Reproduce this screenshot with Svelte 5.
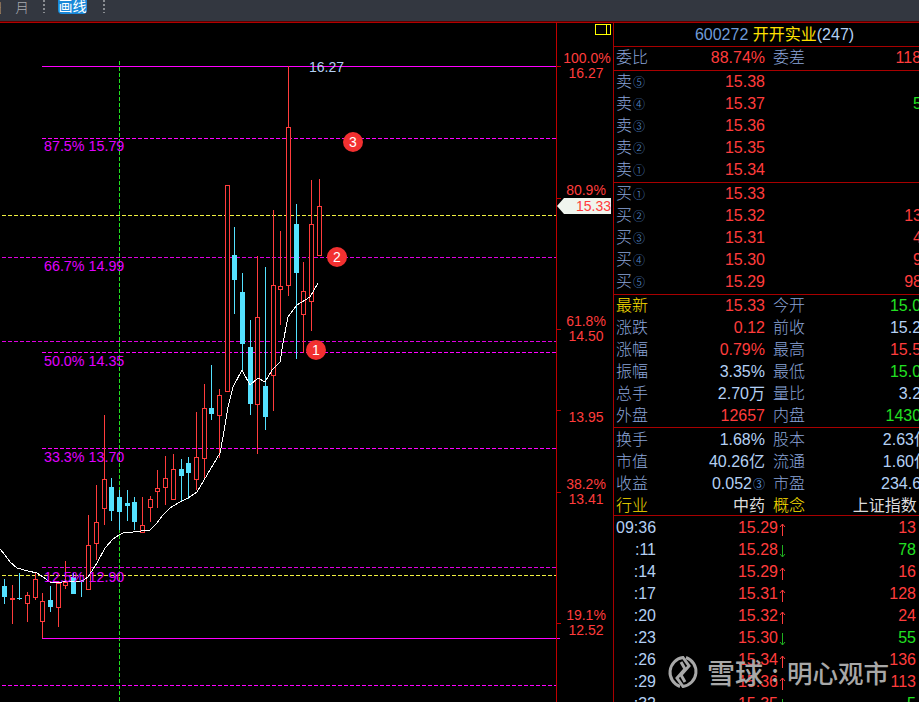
<script>
  // x, high, low, bodyTop, bodyBottom, up (red hollow) / down (cyan filled)
  const candles = [
    [4,579,604,586,597,0],[12,585,624,598,599,1],[19,573,600,598,599,0],[27,592,622,595,603,1],
    [35,573,600,579,597,1],[42,593,638,601,621,1],[50,586,612,600,607,0],[58,582,627,583,607,1],
    [65,561,589,582,585,1],[73,573,594,577,594,0],[81,580,597,581,582,0],[88,515,589,545,589,1],
    [96,485,560,522,543,1],[104,415,525,479,508,1],[111,478,521,487,511,0],[119,490,530,497,512,0],
    [127,490,521,503,506,0],[134,497,530,502,522,0],[142,497,532,525,532,1],[150,496,522,499,507,1],
    [157,470,508,488,491,1],[165,456,505,478,487,1],[173,454,499,469,499,1],[181,459,502,469,476,0],
    [188,457,499,463,473,0],[196,412,490,457,479,1],[204,384,478,408,458,1],[211,365,420,408,414,0],
    [219,389,458,395,415,1],[227,185,392,185,391,1],[234,227,314,255,280,0],[242,273,370,292,344,0],
    [250,320,415,347,404,0],[257,256,454,317,404,1],[265,267,430,386,417,0],[273,210,411,285,375,1],
    [280,231,325,286,289,1],[288,66,296,127,285,1],[296,204,359,224,273,0],[303,262,353,291,314,1],
    [311,180,331,224,301,1],[319,179,255,206,255,1]
  ];
  const ma = '0,549 5,555 10,562 17,568 28,571 37,573 43,577 50,582 62,582 82,581 88,577 97,563 105,548 113,539 119,535 123,533 133,532 150,530 157,523 163,515 170,508 180,502 188,498 197,492 207,475 220,453 223,437 228,407 233,387 242,370 250,385 258,378 265,382 272,370 280,362 283,343 288,317 297,305 310,297 318,283';
  const dashed = [
    {y:138,x:42,c:'#ff00ff'},{y:257,x:2,c:'#e000e0'},{y:341,x:2,c:'#e000e0'},{y:352,x:42,c:'#ff00ff'},
    {y:448,x:42,c:'#ff00ff'},{y:567,x:42,c:'#e000e0'},{y:685,x:2,c:'#ff00ff'}
  ];
  const fibs = [[44,151,'87.5% 15.79'],[44,271,'66.7% 14.99'],[44,366,'50.0% 14.35'],[44,462,'33.3% 13.70'],[44,582,'12.5% 12.90']];
  const badges = [[353,142,'3'],[337,257,'2'],[316,350,'1']];
  const axis = [[587,63,'100.0%'],[586,78,'16.27'],[586,195,'80.9%'],[586,326,'61.8%'],[586,341,'14.50'],[586,422,'13.95'],[586,489,'38.2%'],[586,504,'13.41'],[586,620,'19.1%'],[586,635,'12.52']];
  const ticks = [66,198,329,410,492,623];
  const asks = [['卖','⑤','15.38',''],['卖','④','15.37','5x'],['卖','③','15.36',''],['卖','②','15.35',''],['卖','①','15.34','']];
  const bids = [['买','①','15.33',''],['买','②','15.32','13x'],['买','③','15.31','4x'],['买','④','15.30','9x'],['买','⑤','15.29','98x']];
  const stats = [
    ['最新','y','15.33','r','今开','15.09','g'],['涨跌','l','0.12','r','前收','15.21','v'],
    ['涨幅','l','0.79%','r','最高','15.56','r'],['振幅','l','3.35%','v','最低','15.05','g'],
    ['总手','l','2.70万','v','量比','3.27','v'],['外盘','l','12657','r','内盘','14303','g']
  ];
  const fund = [['换手','1.68%','股本','2.63亿',''],['市值','40.26亿','流通','1.60亿',''],['收益','0.052','市盈','234.67','③']];
  const ticksList = [
    ['09:36','15.29',1,'13','r'],[':11','15.28',0,'78','g'],[':14','15.29',1,'16','r'],
    [':17','15.31',1,'128','r'],[':20','15.32',1,'24','r'],[':23','15.30',0,'55','g'],
    [':26','15.34',1,'136','r'],[':29','15.36',1,'113','r'],[':32','15.35',0,'5','g']
  ];
</script>

<div class="screen">
  <header class="toolbar">
    <span class="tab cut">日</span>
    <span class="tab">月</span>
    <span class="dots first"></span>
    <span class="draw">画线</span>
    <span class="dots"></span>
  </header>
  <main class="main">
    <svg class="chart" width="613" height="680" viewBox="0 22 613 680">
      <!-- price grid -->
      <line x1="119.5" y1="61" x2="119.5" y2="702" stroke="#20e020" stroke-dasharray="4 2"/>
      <line x1="42" y1="66.5" x2="560" y2="66.5" stroke="#ff00ff"/>
      <line x1="42" y1="638.5" x2="560" y2="638.5" stroke="#ff00ff"/>
      {#each dashed as d}
        <line x1={d.x} y1={d.y + .5} x2="556" y2={d.y + .5} stroke={d.c} stroke-dasharray="4 2"/>
      {/each}
      <line x1="2" y1="215.5" x2="556" y2="215.5" stroke="#f0f040" stroke-dasharray="4 2"/>
      <line x1="2" y1="575.5" x2="556" y2="575.5" stroke="#f0f040" stroke-dasharray="4 2"/>

      <!-- candles -->
      {#each candles as [x, hi, lo, top, bot, up]}
        {#if up}
          <line x1={x + .5} y1={hi} x2={x + .5} y2={top} stroke="#ff3c3c"/>
          <line x1={x + .5} y1={bot} x2={x + .5} y2={lo} stroke="#ff3c3c"/>
          <rect x={x - 1.5} y={top + .5} width="4" height={Math.max(bot - top, 1)} fill="#000" stroke="#ff3c3c"/>
        {:else}
          <line x1={x + .5} y1={hi} x2={x + .5} y2={lo} stroke="#54e1ff"/>
          <rect x={x - 2} y={top} width="5" height={Math.max(bot - top, 1)} fill="#54e1ff"/>
        {/if}
      {/each}
      <polyline points={ma} fill="none" stroke="#fff" stroke-width="1" shape-rendering="crispEdges"/>

      <!-- fibonacci labels -->
      {#each fibs as [x, y, t]}
        <text class="fib" {x} {y}>{t}</text>
      {/each}
      <text class="high" x="309" y="72">16.27</text>

      <!-- numbered badges -->
      {#each badges as [x, y, n]}
        <circle cx={x} cy={y} r="10" fill="#f23030"/>
        <text class="badge" {x} y={y + 5}>{n}</text>
      {/each}

      <!-- axis -->
      <line x1="556.5" y1="22" x2="556.5" y2="702" stroke="#c00000"/>
      {#each ticks as y}
        <line x1="556" y1={y + .5} x2="561" y2={y + .5} stroke="#c00000"/>
      {/each}
      {#each axis as [x, y, t]}
        <text class="axis" {x} {y}>{t}</text>
      {/each}
      <rect x="595.5" y="24.5" width="15" height="10" fill="none" stroke="#ffff00"/>
      <line x1="606.5" y1="24" x2="606.5" y2="35" stroke="#ffff00"/>
      <polygon points="557,206 564,198 611,198 611,214 564,214" fill="#f0f5ee"/>
      <text class="tag" x="611" y="211">15.33</text>
    </svg>

    <section class="panel">
      <div class="title"><span class="c-b">600272</span> <span class="c-y">开开实业</span><span class="c-v">(247)</span></div>

      <div class="block head">
        <div class="row">
          <span class="lbl">委比</span><span class="val c-r">88.74%</span><span class="lbl2">委差</span><span class="val2 c-r">1186</span>
        </div>
      </div>

      <div class="block book">
        {#each asks as [a, n, p, v]}
          <div class="row"><span class="lbl">{a}<i class="num">{n}</i></span><span class="val c-r">{p}</span><span class="lbl2"></span><span class="val2 c-g">{v}</span></div>
        {/each}
      </div>

      <div class="block book">
        {#each bids as [a, n, p, v]}
          <div class="row"><span class="lbl">{a}<i class="num">{n}</i></span><span class="val c-r">{p}</span><span class="lbl2"></span><span class="val2 c-r">{v}</span></div>
        {/each}
      </div>

      <div class="block">
        {#each stats as [a, ac, b, bc, c, d, dc]}
          <div class="row">
            <span class="lbl c-{ac}">{a}</span><span class="val c-{bc}">{b}</span><span class="lbl2">{c}</span><span class="val2 c-{dc}">{d}</span>
          </div>
        {/each}
      </div>

      <div class="block fund">
        {#each fund as [a, b, c, d, s]}
          <div class="row"><span class="lbl">{a}</span><span class="val c-v">{b}{#if s}<i class="num">{s}</i>{/if}</span><span class="lbl2">{c}</span><span class="val2 c-v">{d}</span></div>
        {/each}
        <div class="row"><span class="lbl c-y">行业</span><span class="val c-w">中药</span><span class="lbl2 c-y">概念</span><span class="val2 c-w">上证指数 ..</span></div>
      </div>

      <div class="trades">
        {#each ticksList as [t, p, up, v, c]}
          <div class="trade">
            <span class="time c-v">{t}</span>
            <span class="price c-r">{p}
              <svg class="arrow" width="7" height="13" viewBox="0 0 7 13" fill="none" stroke={up ? '#ff3c3c' : '#1fb01f'}>
                {#if up}<path d="M3.5 1v12M1 4l2.5-3L6 4"/>{:else}<path d="M3.5 0v12M1 9l2.5 3L6 9"/>{/if}
              </svg>
            </span>
            <span class="vol c-{c}">{v}</span>
          </div>
        {/each}
      </div>
    </section>
  </main>

  <div class="mark">
    <svg width="34" height="34" viewBox="0 0 34 34" fill="none" stroke="#a8a8a8" stroke-width="3">
      <path d="M14 31.5A15 15 0 0 1 17 2.5L23 11 15 20 19 27"/>
      <path d="M20 2.5A15 15 0 0 1 17 31.5L11 23 19 14 15 7"/>
    </svg>
    <span class="mark-a">雪球</span><span class="mark-c">:</span><span class="mark-b">明心观市</span>
  </div>
</div>

<style>
  :global(body) { margin: 0; background: #000; }
  .screen {
    position: relative;
    width: 919px;
    height: 702px;
    overflow: hidden;
    background: #000;
    font-family: "Liberation Sans", "Noto Sans CJK SC", sans-serif;
  }
  .toolbar {
    display: flex;
    align-items: flex-start;
    height: 21px;
    box-sizing: border-box;
    background: #333740;
    box-shadow: 0 1px 0 #5a0000;
    position: relative;
    z-index: 1;
  }
  .tab {
    font: 300 14px/14px "Noto Sans CJK SC", sans-serif;
    color: #a8abb0;
    height: 14px;
    overflow: hidden;
  }
  .cut { width: 3px; direction: rtl; margin-right: 12px; }
  .dots {
    width: 2px;
    height: 13px;
    background: repeating-linear-gradient(#8a8d92 0 2px, transparent 2px 4px);
  }
  .first { margin-left: 14px; }
  .draw {
    width: 29px;
    height: 14px;
    margin: 0 16px 0 13px;
    text-align: center;
    background: #1a88d8;
    border-radius: 0 0 4px 4px;
    color: #fff;
    font: 400 14px/11px "Noto Sans CJK SC", sans-serif;
    overflow: hidden;
  }
  .main {
    display: flex;
    height: 680px;
    margin-top: 1px;
    border-top: 1px solid #b00000;
    box-sizing: border-box;
  }
  .chart { display: block; flex: none; margin-top: -1px; }
  .fib { font-size: 14.3px; fill: #e000ff; }
  .high { font-size: 14px; fill: #b4d0f4; }
  .badge { font-size: 14px; fill: #fff; text-anchor: middle; }
  .axis { font-size: 14px; fill: #ff3c3c; text-anchor: middle; }
  .tag { font-size: 14px; fill: #ff3c3c; text-anchor: end; }

  .panel {
    flex: 1;
    min-width: 0;
    border-left: 1px solid #a80000;
    overflow: hidden;
    font-size: 16px;
    margin-top: -1px;
  }
  .title {
    height: 24px;
    line-height: 24px;
    box-sizing: border-box;
    text-align: center;
    border-top: 1px solid #a80000;
    padding-left: 16px;
    white-space: pre;
  }
  .block { border-top: 1px solid #a80000; }
  .head { padding-top: 1px; }
  .head .row { line-height: 20px; }
  .head .lbl, .head .lbl2 { line-height: 17px; }
  .fund { padding-top: 1px; }
  .fund .row:last-child { height: 20px; }
  .book { padding-bottom: 1px; }
  .row {
    display: grid;
    grid-template-columns: 94px 55px 60px 1fr;
    height: 22px;
    line-height: 22px;
    white-space: nowrap;
    margin-left: 2px;
    width: 314px;
  }
  .lbl, .lbl2 {
    color: #8aa4d8;
    font-family: "Noto Sans CJK SC", sans-serif;
    font-weight: 300;
    font-size: 16px;
    line-height: 19px;
  }
  .lbl { grid-column: 1; }
  .lbl2 { padding-left: 8px; }
  .val { justify-self: end; grid-column: 2; }
  .val2 { justify-self: end; grid-column: 4; }
  .num { font-style: normal; font-size: 12px; color: #5b92d8; margin-left: 1px; }
  .trades { border-top: 1px solid #a80000; padding-top: 1px; }
  .trade {
    display: grid;
    grid-template-columns: 40px 130px 1fr;
    height: 22px;
    line-height: 22px;
    padding: 0 3px 0 2px;
  }
  .time { text-align: right; }
  .price { justify-self: end; display: flex; align-items: center; gap: 1px; }
  .arrow { display: block; flex: none; margin-top: 2px; }
  .vol { text-align: right; }

  .c-r { color: #ff3c3c; }
  .c-g { color: #22e022; }
  .c-y { color: #ffe000; }
  .c-l { color: #8aa4d8; }
  .c-b { color: #6f9bd8; }
  .c-v { color: #b4d0f4; }
  .c-w { color: #dcdcdc; }

  .mark {
    position: absolute;
    left: 666px;
    top: 655px;
    display: flex;
    align-items: center;
    color: #a8a8a8;
    font-family: "Noto Sans CJK SC", sans-serif;
    font-weight: 500;
    line-height: 34px;
    white-space: nowrap;
  }
  .mark-a { font-size: 28px; margin-left: 7px; }
  .mark-c { font-size: 24px; width: 24px; text-align: center; }
  .mark-b { font-size: 25.5px; }
</style>
